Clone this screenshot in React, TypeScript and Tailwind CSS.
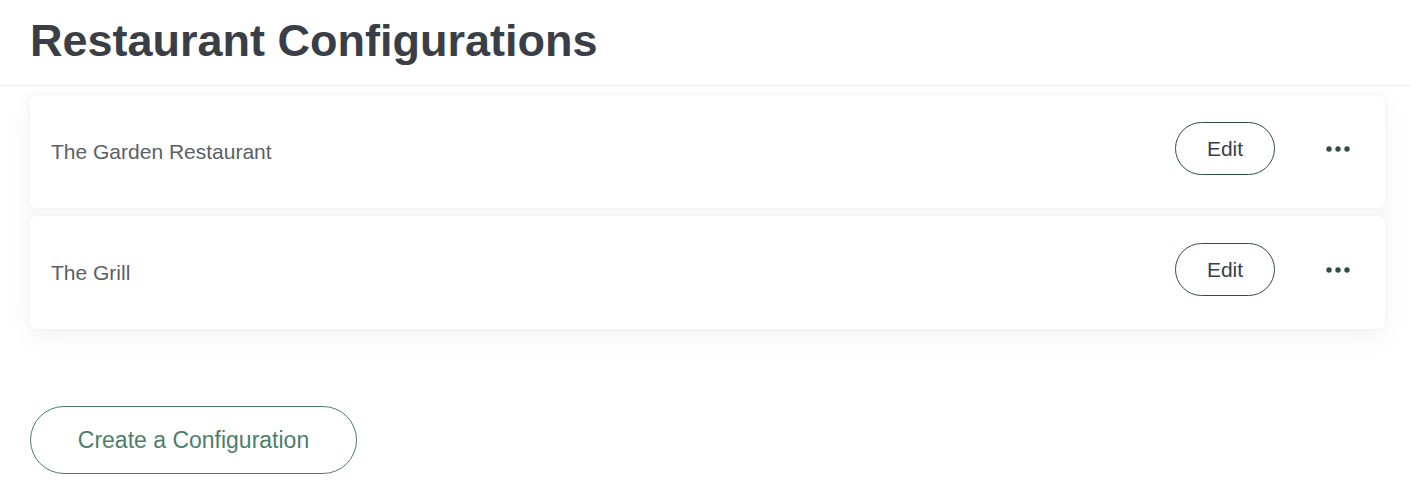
const restaurants = ["The Garden Restaurant", "The Grill"];

const Dots = () => (
  <svg width="26" height="8" viewBox="0 0 26 8" className="text-[#2f4f40]">
    <circle cx="4" cy="4" r="2.7" fill="currentColor" />
    <circle cx="13" cy="4" r="2.7" fill="currentColor" />
    <circle cx="22" cy="4" r="2.7" fill="currentColor" />
  </svg>
);

const RestaurantRow = ({ name }: { name: string }) => (
  <div className="flex h-[113px] items-center justify-between rounded-md bg-white pl-[21px] pr-[34px] shadow-[0_0_6px_rgba(0,0,0,0.04)]">
    <span className="text-[21px] text-[#5b5f66]">{name}</span>
    <div className="flex items-center gap-[50px] pb-[6px]">
      <button className="h-[53px] w-[100px] rounded-full border border-[#2f4f40] text-[21px] text-[#3b3f46]">
        Edit
      </button>
      <Dots />
    </div>
  </div>
);

export default function App() {
  return (
    <div className="min-h-screen bg-white font-['Liberation_Sans',Arial,sans-serif]">
      <header className="border-b border-[#ededed] px-[30px] pb-[17px] pt-[13px]">
        <h1 className="text-[45px] font-bold leading-[55px] text-[#3a3e46]">
          Restaurant Configurations
        </h1>
      </header>
      <section className="pl-[30px] pr-[25px] pt-[9px]">
        <div className="flex flex-col gap-[8px] bg-[#f9f9f9] shadow-[0_8px_24px_rgba(0,0,0,0.05)]">
          {restaurants.map((r) => (
            <RestaurantRow key={r} name={r} />
          ))}
        </div>
        <button className="mt-[77px] h-[68px] w-[327px] rounded-full border border-[#4e7d6c] text-[23px] text-[#4e7d6c]">
          Create a Configuration
        </button>
      </section>
    </div>
  );
}
